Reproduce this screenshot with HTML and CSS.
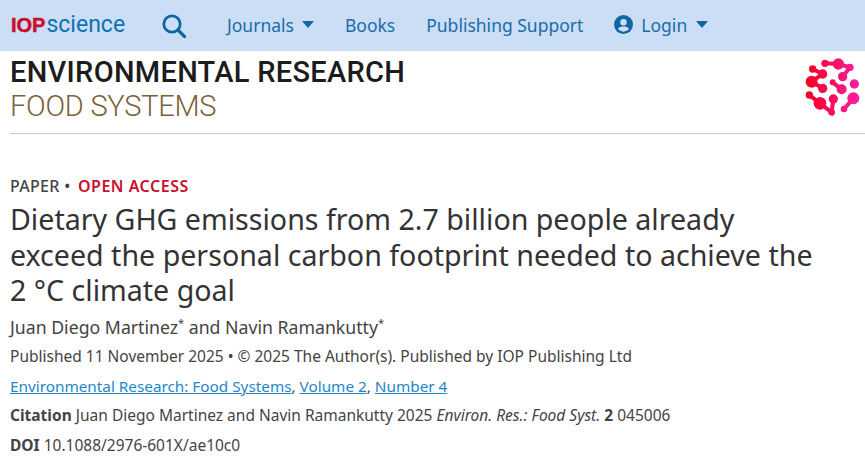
FILE: index.html
```html
<!DOCTYPE html>
<html lang="en">
<head>
<meta charset="utf-8">
<title>Dietary GHG emissions</title>
<link rel="stylesheet" href="styles.css">
</head>
<body>
<nav class="nav">
  <a class="brand"><span class="brand-iop">IOP</span><span class="brand-sci">science</span></a>
  <svg class="search" viewBox="0 0 24 24" width="24" height="24"><circle cx="10" cy="10" r="8.2" fill="none" stroke="#0f66a3" stroke-width="2.8"/><path d="M16 16l7 7" stroke="#0f66a3" stroke-width="3.2" stroke-linecap="round"/></svg>
  <div class="nav-links">
    <a class="nav-link">Journals <i class="caret"></i></a>
    <a class="nav-link">Books</a>
    <a class="nav-link">Publishing Support</a>
    <a class="nav-link login">
      <svg viewBox="0 0 20 20" width="19" height="19"><circle cx="10" cy="10" r="10" fill="#0f66a3"/><circle cx="10" cy="7.6" r="3.4" fill="#cbdef5"/><path d="M4 14.6c1.3-2 3.5-2.6 6-2.6s4.7.6 6 2.6c-1.4 1.7-3.6 2.9-6 2.9s-4.6-1.200-6-2.900z" fill="#cbdef5"/></svg>
      Login <i class="caret"></i></a>
  </div>
</nav>
<header class="journal">
  <div class="journal-name">
    <div class="j1">ENVIRONMENTAL RESEARCH</div>
    <div class="j2">FOOD SYSTEMS</div>
  </div>
  <svg class="jlogo" viewBox="0 3 225 210" width="75" height="70">
    <defs><linearGradient id="g" gradientUnits="userSpaceOnUse" x1="50" y1="0" x2="205" y2="0"><stop offset="0" stop-color="#f5001f"/><stop offset="1" stop-color="#ff1fa0"/></linearGradient></defs>
    <g fill="url(#g)">
      <circle cx="105" cy="40" r="11"/><circle cx="145" cy="42" r="17"/><circle cx="180" cy="52" r="11"/><circle cx="158" cy="80" r="14"/>
      <circle cx="68" cy="57" r="11"/><circle cx="98" cy="72" r="14"/><circle cx="65" cy="95" r="18"/><circle cx="98" cy="115" r="14"/>
      <circle cx="128" cy="97" r="9"/><circle cx="155" cy="118" r="15"/><circle cx="193" cy="102" r="14"/>
      <circle cx="58" cy="135" r="11"/><circle cx="90" cy="160" r="19"/><circle cx="130" cy="147" r="14"/><circle cx="125" cy="187" r="10"/>
      <circle cx="190" cy="145" r="18"/><circle cx="162" cy="177" r="10"/>
    </g>
    <path d="M105 40L145 42L180 52L158 80M68 57L98 72L65 95L98 115M128 97L155 118M58 135L90 160L125 187L130 147M190 145L162 177" fill="none" stroke="url(#g)" stroke-width="12"/>
  </svg>
</header>
<main class="article">
  <div class="kicker">PAPER • <span class="open">OPEN ACCESS</span></div>
  <h1 class="title">Dietary GHG emissions from 2.7 billion people already exceed the personal carbon footprint needed to achieve the 2 °C climate goal</h1>
  <p class="authors">Juan Diego Martinez<sup>*</sup> and Navin Ramankutty<sup>*</sup></p>
  <p class="meta published">Published 11 November 2025 • © 2025 The Author(s). Published by IOP Publishing Ltd</p>
  <p class="meta links"><a>Environmental Research: Food Systems</a>, <a>Volume 2</a>, <a>Number 4</a></p>
  <p class="meta"><b>Citation</b> Juan Diego Martinez and Navin Ramankutty 2025 <em>Environ. Res.: Food Syst.</em> <b>2</b> 045006</p>
  <p class="meta"><b>DOI</b> 10.1088/2976-601X/ae10c0</p>
</main>
</body>
</html>
```
FILE: styles.css
```css
* { box-sizing: border-box; }
html, body { margin: 0; padding: 0; }
body {
  width: 865px;
  height: 463px;
  overflow: hidden;
  background: #fff;
  color: #333;
  font-family: "Noto Sans", "Open Sans", sans-serif;
}
.nav {
  height: 51px;
  background: #cbdef5;
  display: flex;
  align-items: center;
  padding-left: 11px;
}
.brand { display: flex; align-items: baseline; width: 151px; margin-top: -2px; }
.brand-iop {
  font: 700 20px "Liberation Sans", sans-serif;
  color: #c8102e;
  -webkit-text-stroke: 0.5px #c8102e;
  margin-right: 1px;
}
.brand-sci {
  font: 400 23px "Roboto", sans-serif;
  color: #0f72b0;
}
.search { margin-right: 41px; }
.nav-links { display: flex; gap: 31px; margin-top: -2px; }
.nav-link {
  font-size: 17.5px;
  color: #1a6ca8;
  display: flex;
  align-items: center;
  gap: 7px;
  white-space: nowrap;
}
.login { gap: 8px; }
.caret {
  display: inline-block;
  border-left: 6.5px solid transparent;
  border-right: 6.5px solid transparent;
  border-top: 7px solid #0f66a3;
  margin-left: 1px;
}
.journal {
  margin: 0 0 0 10px;
  height: 83px;
  border-bottom: 1px solid #c9c9c9;
  display: flex;
  justify-content: space-between;
  align-items: flex-start;
}
.journal-name { padding-top: 4px; }
.j1 { font: 500 29px/34px "Roboto", sans-serif; color: #1c1c1c; letter-spacing: 0.3px; }
.j2 { font: 300 29px/34px "Roboto", sans-serif; color: #7a6238; letter-spacing: -0.25px; }
.article { padding: 42px 45px 0 10px; }
.kicker { font-size: 16px; line-height: 20px; font-weight: 500; color: #444; letter-spacing: 0.3px; }
.open { color: #c8102e; font-weight: 600; letter-spacing: 0.5px; margin-left: 3px; }
.title { margin: 5px 0 0; font-size: 28.6px; line-height: 35.5px; font-weight: 400; color: #333; }
.authors { margin: 7px 0 0; font-size: 17.7px; line-height: 24px; color: #444; }
.authors sup { font-size: 11px; line-height: 0; }
.meta { margin: 9.5px 0 0; font-size: 15.5px; line-height: 20px; color: #444; }
.published { margin-top: 7.5px; }
.links { font-size: 15.3px; }
.links a { color: #1f86c8; text-decoration: underline; }
```
